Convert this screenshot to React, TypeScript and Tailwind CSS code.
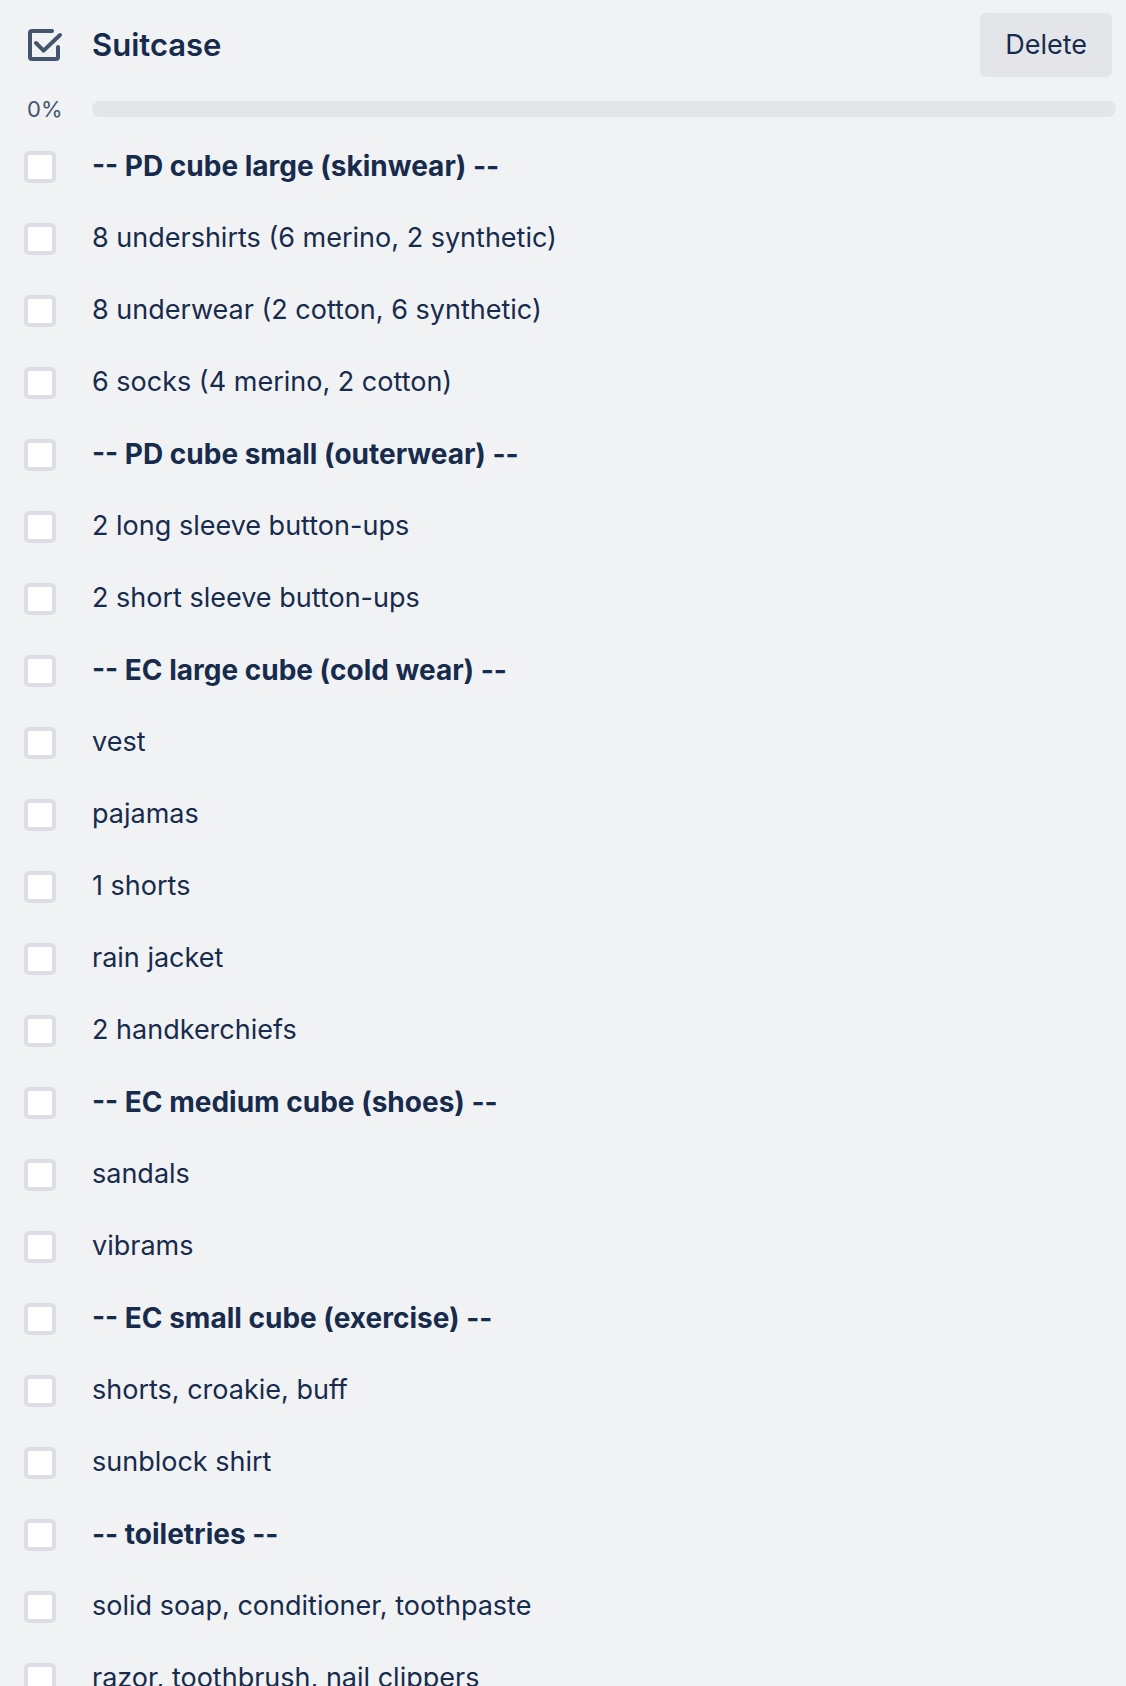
const items = [
  { text: "-- PD cube large (skinwear) --", heading: true },
  { text: "8 undershirts (6 merino, 2 synthetic)" },
  { text: "8 underwear (2 cotton, 6 synthetic)" },
  { text: "6 socks (4 merino, 2 cotton)" },
  { text: "-- PD cube small (outerwear) --", heading: true },
  { text: "2 long sleeve button-ups" },
  { text: "2 short sleeve button-ups" },
  { text: "-- EC large cube (cold wear) --", heading: true },
  { text: "vest" },
  { text: "pajamas" },
  { text: "1 shorts" },
  { text: "rain jacket" },
  { text: "2 handkerchiefs" },
  { text: "-- EC medium cube (shoes) --", heading: true },
  { text: "sandals" },
  { text: "vibrams" },
  { text: "-- EC small cube (exercise) --", heading: true },
  { text: "shorts, croakie, buff" },
  { text: "sunblock shirt" },
  { text: "-- toiletries --", heading: true },
  { text: "solid soap, conditioner, toothpaste" },
  { text: "razor, toothbrush, nail clippers" },
];

function ChecklistIcon() {
  return (
    <svg
      viewBox="0 0 36 36"
      className="size-9 shrink-0 text-[#44546f]"
      fill="none"
      stroke="currentColor"
      strokeWidth="4"
      strokeLinecap="round"
      aria-hidden="true"
    >
      <path d="M24 4H4Q2 4 2 6V30Q2 32 4 32H28Q30 32 30 30V20" />
      <path d="M8 16L15.6 23.6L32 8" strokeLinejoin="round" />
    </svg>
  );
}

function ChecklistItem({ id, text, heading }: { id: string; text: string; heading?: boolean }) {
  return (
    <li className="flex h-[72px] items-center gap-9">
      <input
        id={id}
        type="checkbox"
        className="size-8 shrink-0 appearance-none rounded-[5px] border-4 border-[#dddee4] bg-white checked:bg-[#0c66e4]"
      />
      <label htmlFor={id} className={heading ? "pb-0.5 text-[28px] font-bold" : "pb-0.5"}>
        {text}
      </label>
    </li>
  );
}

export default function App() {
  return (
    <main className="h-screen overflow-hidden bg-[#f1f2f4] font-[Inter,sans-serif] text-[27px] leading-10 text-[#172b4d]">
      <header className="flex items-center pt-[13px] pr-3.5 pl-7">
        <ChecklistIcon />
        <h2 className="ml-7 flex-1 text-[31px] font-semibold">Suitcase</h2>
        <button type="button" className="h-16 rounded-md bg-[#e4e5e9] px-[25px]">
          Delete
        </button>
      </header>
      <div className="mt-5 flex h-6 items-center pr-2.5 pl-[27px]">
        <span className="w-[65px] text-[22px] leading-6 text-[#44546f]">0%</span>
        <div
          role="progressbar"
          aria-label="Suitcase progress"
          aria-valuenow={0}
          aria-valuemin={0}
          aria-valuemax={100}
          className="h-4 flex-1 rounded-full bg-[#e4e5e9]"
        />
      </div>
      <ul className="mt-[10px] pl-6">
        {items.map((item, i) => (
          <ChecklistItem key={item.text} id={`item-${i}`} text={item.text} heading={item.heading} />
        ))}
      </ul>
    </main>
  );
}
